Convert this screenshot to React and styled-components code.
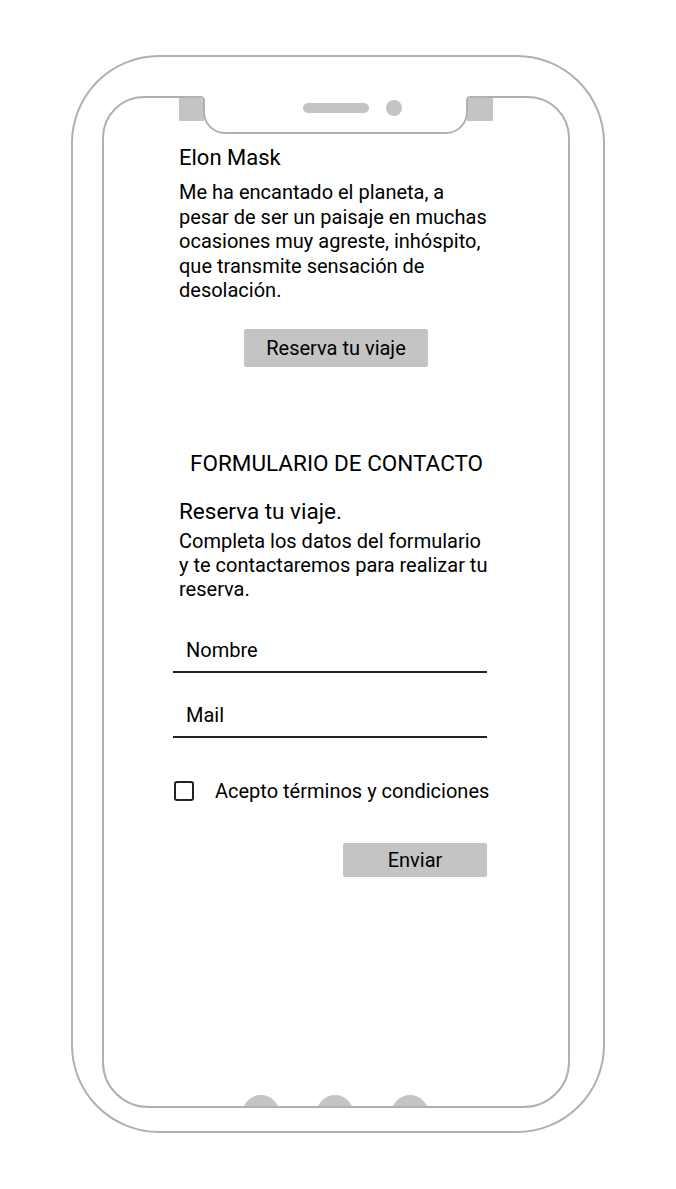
import styled, { createGlobalStyle } from 'styled-components';

const FRAME = '#b0b0b0';
const FILL = '#c4c4c4';
const INK = '#000';

const GlobalStyle = createGlobalStyle`
  body {
    margin: 0;
    background: #fff;
    font-family: Roboto, 'Noto Sans', Arial, sans-serif;
    color: ${INK};
  }
`;

export default function App() {
  return (
    <>
      <GlobalStyle />
      <Page>
        <Phone>
          <Screen>
            <Notch viewBox="0 0 468 40" aria-hidden="true">
              <path d="M77 2 H98 Q102 2 102 6 V25 H77 Z" fill={FILL} />
              <path d="M369 2 H391 V25 H365 V6 Q365 2 369 2 Z" fill={FILL} />
              <rect x="99" y="-1" width="269" height="4" fill="#fff" />
              <path
                d="M98 1 Q102 1 102 5 V16 A21 21 0 0 0 123 37 H344 A21 21 0 0 0 365 16 V5 Q365 1 369 1"
                fill="none"
                stroke={FRAME}
                strokeWidth="2"
              />
              <rect x="201" y="7" width="66" height="10" rx="5" fill={FILL} />
              <circle cx="292" cy="12" r="8" fill={FILL} />
            </Notch>

            <Column>
              <Author>Elon Mask</Author>
              <Quote>
                Me ha encantado el planeta, a<br />
                pesar de ser un paisaje en muchas<br />
                ocasiones muy agreste, inhóspito,<br />
                que transmite sensación de<br />
                desolación.
              </Quote>
              <GrayButton $width={184} $height={38} $offset={71}>
                Reserva tu viaje
              </GrayButton>

              <FormTitle>FORMULARIO DE CONTACTO</FormTitle>
              <FormHeading>Reserva tu viaje.</FormHeading>
              <Intro>
                Completa los datos del formulario<br />
                y te contactaremos para realizar tu<br />
                reserva.
              </Intro>

              <Field placeholder="Nombre" $gap={37} />
              <Field placeholder="Mail" $gap={30} />

              <CheckRow>
                <Check type="checkbox" />
                Acepto términos y condiciones
              </CheckRow>

              <SubmitRow>
                <GrayButton $width={144} $height={34}>
                  Enviar
                </GrayButton>
              </SubmitRow>
            </Column>

            <HomeDots viewBox="0 0 468 20" aria-hidden="true">
              <defs>
                <clipPath id="above-line">
                  <rect x="0" y="0" width="468" height="18" />
                </clipPath>
              </defs>
              <g clipPath="url(#above-line)" fill={FILL}>
                <circle cx="159" cy="25.5" r="18.5" />
                <circle cx="233" cy="25.5" r="18.5" />
                <circle cx="308" cy="25.5" r="18.5" />
              </g>
            </HomeDots>
          </Screen>
        </Phone>
      </Page>
    </>
  );
}

const Page = styled.div`
  width: 676px;
  height: 1189px;
  padding-top: 55px;
  box-sizing: border-box;
  display: flex;
  justify-content: center;
`;

const Phone = styled.div`
  width: 534px;
  height: 1078px;
  box-sizing: border-box;
  border: 2px solid ${FRAME};
  border-radius: 88px;
  padding: 39px 33px 23px 29px;
`;

const Screen = styled.div`
  position: relative;
  height: 100%;
  box-sizing: border-box;
  border: 2px solid ${FRAME};
  border-radius: 42px 42px 46px 46px;
  padding: 47px 0 0 69px;
`;

const Notch = styled.svg`
  position: absolute;
  top: -2px;
  left: -2px;
  width: 468px;
  height: 40px;
  overflow: visible;
`;

const HomeDots = styled.svg`
  position: absolute;
  bottom: -2px;
  left: -2px;
  width: 468px;
  height: 20px;
`;

const Column = styled.div`
  width: 314px;
  display: flex;
  flex-direction: column;
  align-items: flex-start;
`;

const Author = styled.h2`
  margin: 0;
  padding-left: 6px;
  font-size: 22px;
  line-height: 26px;
  font-weight: 400;
`;

const Quote = styled.p`
  margin: 9px 0 0;
  padding-left: 6px;
  font-size: 20px;
  line-height: 24.5px;
  white-space: nowrap;
`;

const GrayButton = styled.button`
  width: ${(p) => p.$width}px;
  height: ${(p) => p.$height}px;
  margin-left: ${(p) => p.$offset || 0}px;
  margin-top: 26px;
  border: none;
  border-radius: 2px;
  background: ${FILL};
  color: ${INK};
  font-family: inherit;
  font-size: 20px;
  padding: 0;
  cursor: pointer;
`;

const FormTitle = styled.h3`
  margin: 84px 0 0;
  padding-left: 17px;
  font-size: 22.5px;
  line-height: 24px;
  font-weight: 400;
  white-space: nowrap;
`;

const FormHeading = styled.h4`
  margin: 23px 0 0;
  padding-left: 6px;
  font-size: 22.5px;
  line-height: 26px;
  font-weight: 400;
`;

const Intro = styled.p`
  margin: 5px 0 0;
  padding-left: 6px;
  font-size: 20px;
  line-height: 24px;
  white-space: nowrap;
`;

const Field = styled.input`
  width: 100%;
  box-sizing: border-box;
  margin: ${(p) => p.$gap}px 0 0;
  padding: 0 0 9px 13px;
  border: none;
  border-bottom: 2px solid #222;
  outline: none;
  font-family: inherit;
  font-size: 20px;
  line-height: 24px;
  height: 35px;
  color: ${INK};
  &::placeholder {
    color: ${INK};
  }
`;

const CheckRow = styled.label`
  margin-top: 41px;
  padding-left: 1px;
  display: flex;
  align-items: center;
  gap: 21px;
  font-size: 20px;
  line-height: 24px;
  white-space: nowrap;
`;

const Check = styled.input`
  appearance: none;
  margin: 0;
  width: 20px;
  height: 20px;
  box-sizing: border-box;
  border: 2px solid #222;
  border-radius: 3px;
`;

const SubmitRow = styled.div`
  align-self: stretch;
  display: flex;
  justify-content: flex-end;
  margin-top: 14px;
`;
